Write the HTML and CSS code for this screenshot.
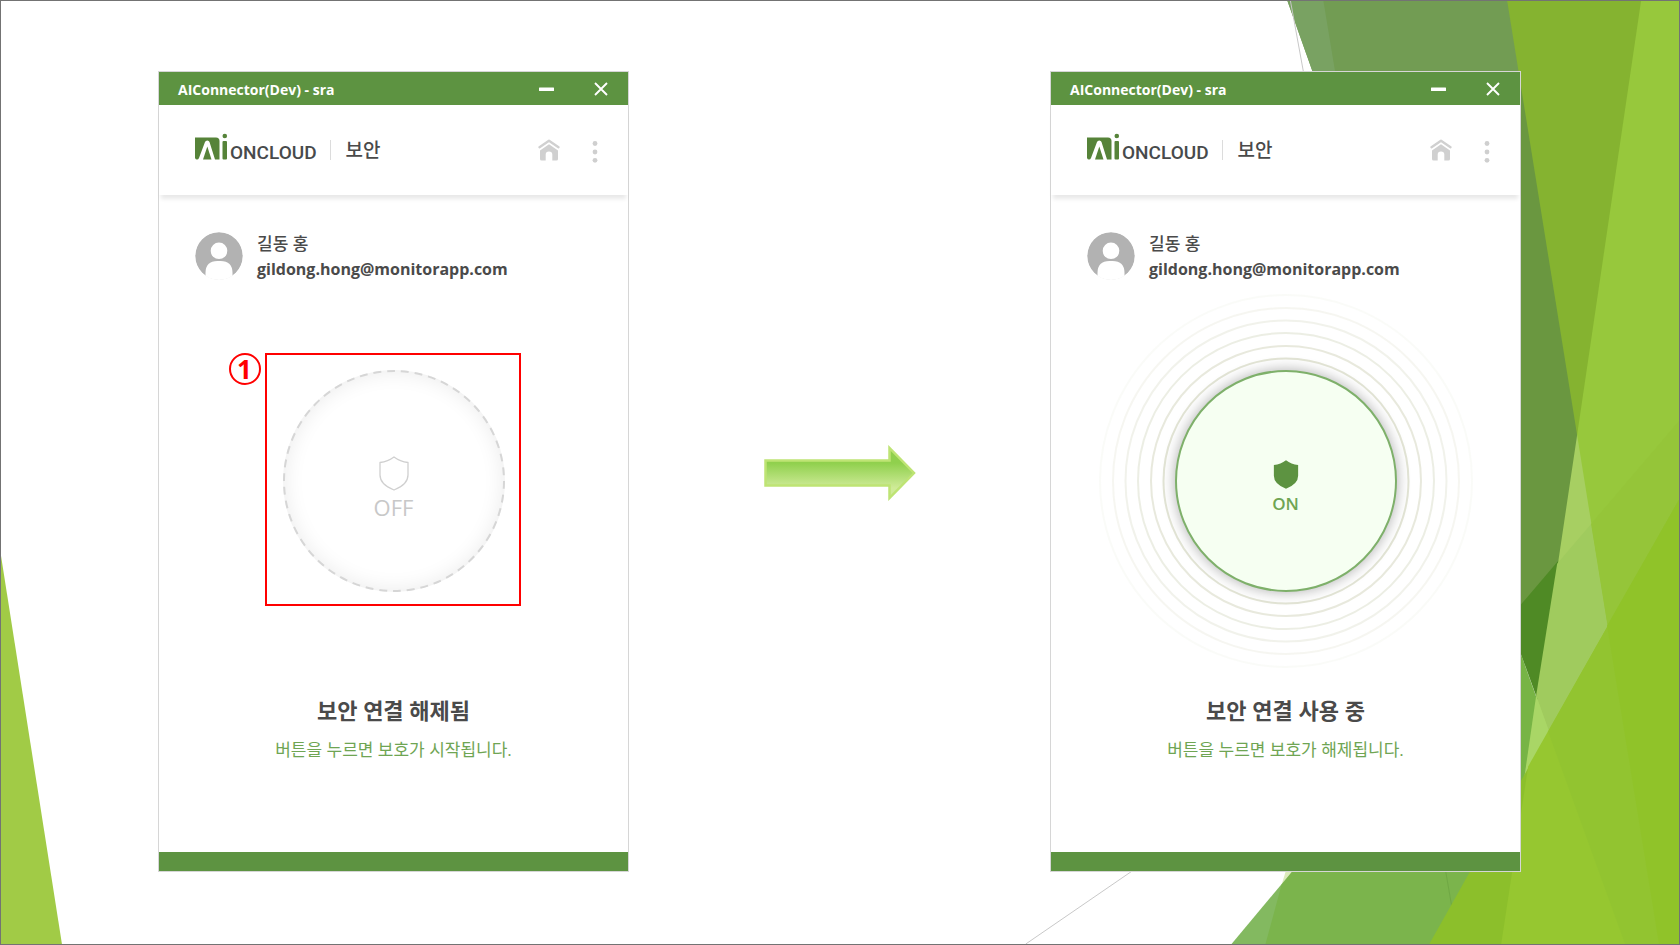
FILE: index.html
```html
<!DOCTYPE html>
<html lang="ko">
<head>
  <meta charset="UTF-8">
  <meta name="viewport" content="width=device-width, initial-scale=1.0">
  <title>AIConnector</title>
  <link rel="stylesheet" href="styles.css">
</head>
<body>
  <!-- shared icons -->
  <svg class="sprite" aria-hidden="true">
    <symbol id="logo-mark" viewBox="0 0 33 27">
      <path fill="#568339" fill-rule="evenodd" d="M0 4.500H21q3.500 0 3.500 3.500V26.500H20L14.500 9q-.5-1.500-2.200-1.500T10 9L4 25q-.6 1.500-2 1.500T0 25Z"/>
      <path fill="#568339" d="M8 26.500 12.300 13.500 16.500 26.500Z"/>
      <rect fill="#568339" x="27.500" y="8" width="4.500" height="18.500" rx="1"/>
      <circle fill="#568339" cx="29.800" cy="3" r="2.300"/>
    </symbol>
    <symbol id="icon-home" viewBox="0 0 22 22">
      <path d="M1.500 8.200 11 1.800 20.500 8.200" fill="none" stroke="#d0d0d0" stroke-width="2.400" stroke-linecap="round" stroke-linejoin="round"/>
      <path fill="#d0d0d0" d="M11 5.200 20 11.500V20q0 1.600-1.600 1.600H14.300V15.500q0-3-3.300-3t-3.300 3V21.600H3.600Q2 21.600 2 20V11.500Z"/>
    </symbol>
    <symbol id="icon-more" viewBox="0 0 6 22">
      <circle fill="#cfcfcf" cx="3" cy="2.500" r="2.400"/>
      <circle fill="#cfcfcf" cx="3" cy="11" r="2.400"/>
      <circle fill="#cfcfcf" cx="3" cy="19.300" r="2.400"/>
    </symbol>
    <symbol id="icon-minimize" viewBox="0 0 15 14">
      <rect fill="#fff" y="5.500" width="15" height="3.500" rx=".5"/>
    </symbol>
    <symbol id="icon-close" viewBox="0 0 14 14">
      <path d="M1 1 13 13M13 1 1 13" fill="none" stroke="#fff" stroke-width="1.900"/>
    </symbol>
    <symbol id="icon-avatar" viewBox="0 0 48 48">
      <circle fill="#b2b2b2" cx="24" cy="24" r="23.700"/>
      <circle fill="#fff" cx="24" cy="18.800" r="8.300"/>
      <path fill="#fff" d="M10.500 48V41q0-12 12-12h3q12 0 12 12v7Z"/>
    </symbol>
    <symbol id="icon-shield" viewBox="0 0 30 35">
      <path d="M15 1Q21 5.500 29 6.500V19Q29 28.500 15 34 1 28.500 1 19V6.500Q9 5.500 15 1Z" stroke-linejoin="round"/>
    </symbol>
  </svg>

  <main class="slide">
    <svg class="backdrop" viewBox="0 0 1680 945" preserveAspectRatio="none" aria-hidden="true">
      <path class="hairline" d="M1026 945 1240 798"/>
      <polygon fill="#a1cb46" points="0,556 0,945 61,945"/>

      <!-- top and right -->
      <polygon fill="#729c53" points="1288,0 1530,0 1560,200 1359,200"/>
      <polygon fill="#79a262" points="1288,0 1324,0 1357,200 1359,200"/>
      <path class="hairline" d="M1291 0 1424 727"/>
      <polygon fill="#6a9740" points="1400,85 1540,85 1600,480 1560,606 1400,606"/>
      <polygon fill="#77b445" points="1500,594 1626,945 1430,945 1430,594"/>
      <polygon fill="#4f8a25" points="1519,608 1560,560 1560,760 1519,647"/>
      <polygon fill="#85b330" points="1508,0 1660,0 1600,435 1578,435"/>
      <polygon fill="#a7cf62" points="1578,435 1642,465 1680,421 1680,945 1502,945"/>
      <polygon fill="#a0cb5e" points="1558,564 1680,421 1680,945 1626,945 1537,696"/>
      <polygon fill="#a9d666" points="1537,696 1560,760 1560,800 1522,800"/>
      <polygon fill="#97c83c" points="1642,0 1680,0 1680,945 1660,945 1578,435"/>
      <polygon fill="#95c539" points="1592,524 1680,421 1680,945 1660,945"/>

      <!-- bottom -->
      <polygon fill="#dcebbb" points="1290,860 1310,860 1274,912"/>
      <polygon fill="#83b960" points="1232,945 1303,860 1470,860 1470,945"/>
      <polygon fill="#7bb44c" points="1266,945 1282,886 1303,860 1500,860 1500,945"/>
      <path d="M1445 864 1459 945" fill="none" stroke="#6fa844"/>
      <polygon fill="#8cbf2b" points="1430,945 1680,500 1680,945"/>
      <polygon fill="#96c730" points="1502,945 1529,767 1680,500 1680,945"/>
      <polygon fill="#92c430" points="1549,732 1680,500 1680,945 1626,945"/>
      <polygon fill="#90c329" points="1608,626 1680,500 1680,945 1660,945"/>
    </svg>

    <section class="app-window">
      <header class="title-bar">
        <span class="title-text">AIConnector(Dev) - sra</span>
        <button class="icon-button" type="button" aria-label="최소화"><svg width="15" height="14"><use href="#icon-minimize"/></svg></button>
        <button class="icon-button" type="button" aria-label="닫기"><svg width="14" height="14"><use href="#icon-close"/></svg></button>
      </header>
      <nav class="app-header">
        <a class="logo" href="#"><svg width="33" height="27"><use href="#logo-mark"/></svg><span>ONCLOUD</span></a>
        <span class="page-name">보안</span>
        <button class="icon-button" type="button" aria-label="홈"><svg width="22" height="22"><use href="#icon-home"/></svg></button>
        <button class="icon-button more" type="button" aria-label="메뉴"><svg width="6" height="22"><use href="#icon-more"/></svg></button>
      </nav>
      <div class="app-body">
        <div class="user">
          <svg width="48" height="48"><use href="#icon-avatar"/></svg>
          <div>
            <p class="user-name">길동 홍</p>
            <p class="user-email">gildong.hong@monitorapp.com</p>
          </div>
        </div>
        <div class="power">
          <button class="power-button off" type="button">
            <svg class="dashes" viewBox="0 0 222 222"><circle cx="111" cy="111" r="110" pathLength="700"/></svg>
            <svg class="shield" width="30" height="35"><use href="#icon-shield"/></svg>
            <span>OFF</span>
          </button>
          <div class="callout"></div>
          <span class="callout-number">1</span>
        </div>
        <h2 class="status">보안 연결 해제됨</h2>
        <p class="hint">버튼을 누르면 보호가 시작됩니다.</p>
      </div>
      <footer class="app-footer"></footer>
    </section>

    <svg class="arrow" width="152" height="56" viewBox="0 0 152 56" aria-hidden="true">
      <defs>
        <linearGradient id="arrow-fill" x1="0" y1="0" x2="0" y2="1">
          <stop offset=".3" stop-color="#90d04d"/>
          <stop offset=".8" stop-color="#cfeb98"/>
        </linearGradient>
      </defs>
      <path d="M1.500 15.500H125.500V3L150 28 125.500 53V40.500H1.500Z" fill="url(#arrow-fill)" stroke="#bee474" stroke-width="2.500"/>
    </svg>

    <section class="app-window">
      <header class="title-bar">
        <span class="title-text">AIConnector(Dev) - sra</span>
        <button class="icon-button" type="button" aria-label="최소화"><svg width="15" height="14"><use href="#icon-minimize"/></svg></button>
        <button class="icon-button" type="button" aria-label="닫기"><svg width="14" height="14"><use href="#icon-close"/></svg></button>
      </header>
      <nav class="app-header">
        <a class="logo" href="#"><svg width="33" height="27"><use href="#logo-mark"/></svg><span>ONCLOUD</span></a>
        <span class="page-name">보안</span>
        <button class="icon-button" type="button" aria-label="홈"><svg width="22" height="22"><use href="#icon-home"/></svg></button>
        <button class="icon-button more" type="button" aria-label="메뉴"><svg width="6" height="22"><use href="#icon-more"/></svg></button>
      </nav>
      <div class="app-body">
        <div class="user">
          <svg width="48" height="48"><use href="#icon-avatar"/></svg>
          <div>
            <p class="user-name">길동 홍</p>
            <p class="user-email">gildong.hong@monitorapp.com</p>
          </div>
        </div>
        <div class="power">
          <svg class="rings" viewBox="0 0 376 376" aria-hidden="true">
            <circle cx="188" cy="188" r="122.500" opacity=".9"/>
            <circle cx="188" cy="188" r="135" opacity=".75"/>
            <circle cx="188" cy="188" r="148" opacity=".6"/>
            <circle cx="188" cy="188" r="160.500" opacity=".45"/>
            <circle cx="188" cy="188" r="173" opacity=".3"/>
            <circle cx="188" cy="188" r="186" opacity=".15"/>
          </svg>
          <button class="power-button on" type="button">
            <svg class="shield" width="26" height="31"><use href="#icon-shield"/></svg>
            <span>ON</span>
          </button>
        </div>
        <h2 class="status">보안 연결 사용 중</h2>
        <p class="hint">버튼을 누르면 보호가 해제됩니다.</p>
      </div>
      <footer class="app-footer"></footer>
    </section>
  </main>
</body>
</html>
```
FILE: styles.css
```css
* {
  margin: 0;
  padding: 0;
  box-sizing: border-box;
}

body {
  font-family: "Open Sans", "Noto Sans CJK KR", sans-serif;
  color: #4a4a4a;
  background: #ffffff;
}

button {
  font: inherit;
  background: none;
  border: none;
  cursor: pointer;
}

svg {
  display: block;
}

.sprite {
  position: absolute;
  width: 0;
  height: 0;
}

.slide {
  position: relative;
  display: grid;
  grid-template-columns: 1fr 421px 1fr;
  align-items: start;
  min-height: 100vh;
  padding: 70px 158px 70px 157px;
  border: 1px solid #737373;
  overflow: hidden;
}

.backdrop {
  position: absolute;
  inset: 0;
  width: 100%;
  height: 100%;
  z-index: -1;
}

.hairline {
  fill: none;
  stroke: #c8c8c8;
}

.arrow {
  place-self: center;
}

/* App window */
.app-window {
  background: #ffffff;
  border: 1px solid #d6d6d6;
}

.title-bar {
  display: flex;
  align-items: center;
  gap: 40px;
  height: 33px;
  padding: 0 20px 0 19px;
  background: #5d9341;
}

.title-text {
  flex: 1;
  padding-top: 2px;
  color: #ffffff;
  font-size: 14px;
  font-weight: 700;
}

.icon-button {
  display: flex;
}

.app-header {
  display: flex;
  align-items: center;
  height: 90px;
  padding: 0 30px 0 36px;
  box-shadow: 0 6px 4px -2px rgba(0, 0, 0, 0.09);
}

.logo {
  display: flex;
  align-items: flex-end;
  gap: 2px;
  padding-bottom: 8px;
  color: #474a4b;
  font-family: Roboto, sans-serif;
  font-size: 19px;
  font-weight: 500;
  line-height: 22px;
  text-decoration: none;
}

.logo span {
  margin-bottom: -4px;
}

.page-name {
  flex: 1;
  margin-left: 13px;
  padding-left: 15px;
  border-left: 1px solid #dcdcdc;
  font-size: 19px;
  font-weight: 500;
  line-height: 20px;
}

.more {
  margin-left: 32px;
  padding-top: 3px;
}

.app-body {
  display: flex;
  flex-direction: column;
  align-items: center;
  padding: 37px 36px 90px;
}

.user {
  display: flex;
  align-self: stretch;
  gap: 14px;
  font-size: 16px;
  line-height: 26px;
}

.user svg {
  border-radius: 50%;
}

.user-name {
  font-size: 17px;
  font-weight: 500;
  line-height: 24px;
}

.user-email {
  font-weight: 700;
}

/* Power button */
.power {
  position: relative;
  margin: 88px 0 103px;
}

.power-button {
  position: relative;
  display: flex;
  flex-direction: column;
  align-items: center;
  justify-content: center;
  gap: 4px;
  width: 222px;
  height: 222px;
  border-radius: 50%;
}

.power-button.off {
  padding-top: 12px;
  color: #c8c8c8;
  font-size: 22px;
  line-height: 24px;
  box-shadow: inset 0 0 22px rgba(0, 0, 0, 0.09);
}

.power-button.on {
  padding-top: 10px;
  color: #6fa553;
  font-size: 17px;
  font-weight: 600;
  line-height: 20px;
  background: #f6fff2;
  border: 2px solid #7eb06a;
  box-shadow: 0 0 14px rgba(0, 0, 0, 0.32);
}

.off .shield {
  fill: none;
  stroke: #d0d0d0;
  stroke-width: 1.3;
}

.on .shield {
  fill: #5d9341;
}

.dashes {
  position: absolute;
  inset: 0;
  fill: none;
  stroke: #d6d6d6;
  stroke-width: 2;
  stroke-dasharray: 8 6;
}

.rings {
  position: absolute;
  inset: -77px;
  fill: none;
  stroke: #e0e2d2;
  stroke-width: 2;
}

.callout {
  position: absolute;
  inset: -17px -16px -14px -18px;
  border: 2px solid #ff0000;
  pointer-events: none;
}

.callout-number {
  position: absolute;
  top: -17px;
  left: -54px;
  width: 32px;
  height: 32px;
  border: 2px solid #ff0000;
  border-radius: 50%;
  color: #ff0000;
  font-size: 26px;
  font-weight: 700;
  line-height: 28px;
  text-align: center;
}

.status {
  margin-bottom: 13px;
  font-size: 22px;
  font-weight: 700;
  line-height: 30px;
}

.hint {
  color: #6fa553;
  font-size: 17px;
  line-height: 24px;
}

.app-footer {
  height: 19px;
  background: #5d9341;
}
```
